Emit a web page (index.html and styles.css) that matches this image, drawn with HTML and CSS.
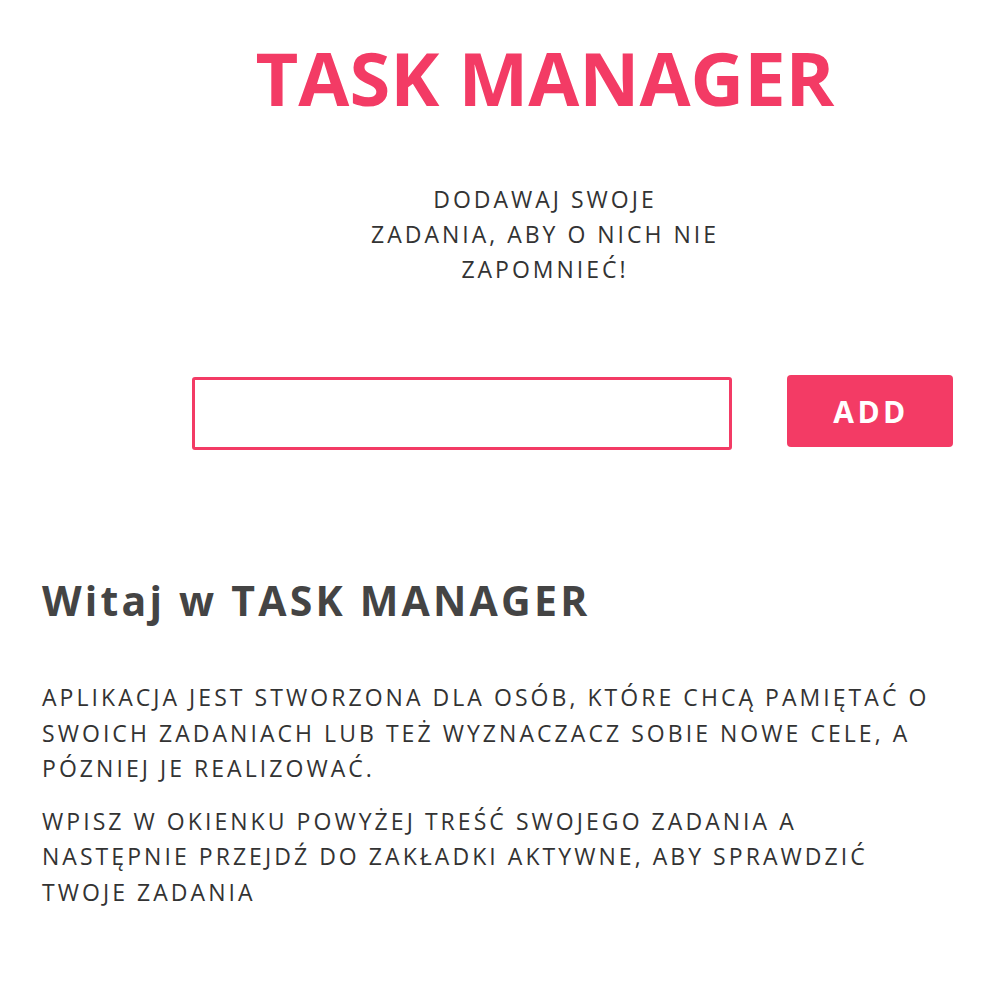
FILE: index.html
```html
<!DOCTYPE html>
<html lang="pl">
<head>
<meta charset="utf-8">
<title>Task Manager</title>
<link rel="stylesheet" href="styles.css">
</head>
<body>
<header class="hero">
  <h1 class="logo">TASK MANAGER</h1>
  <p class="tagline">DODAWAJ SWOJE ZADANIA, ABY O NICH NIE ZAPOMNIEĆ!</p>
  <form class="add-form">
    <input class="task-input" type="text">
    <button class="add-btn" type="button">ADD</button>
  </form>
</header>
<main class="intro">
  <h2 class="intro-title">Witaj w TASK MANAGER</h2>
  <p class="intro-text">APLIKACJA JEST STWORZONA DLA OSÓB, KTÓRE CHCĄ PAMIĘTAĆ O SWOICH ZADANIACH LUB TEŻ WYZNACZACZ SOBIE NOWE CELE, A PÓZNIEJ JE REALIZOWAĆ.</p>
  <p class="intro-text">WPISZ W OKIENKU POWYŻEJ TREŚĆ SWOJEGO ZADANIA A NASTĘPNIE PRZEJDŹ DO ZAKŁADKI AKTYWNE, ABY SPRAWDZIĆ TWOJE ZADANIA</p>
</main>
</body>
</html>
```

FILE: styles.css
```css
* { box-sizing: border-box; }
body {
  margin: 0;
  background: #fff;
  font-family: "Open Sans", "Noto Sans", sans-serif;
  color: #333;
}
.hero {
  margin-left: 90px;
  padding-top: 28px;
  display: flex;
  flex-direction: column;
  align-items: center;
}
.logo {
  margin: 0;
  font-size: 74px;
  font-weight: 700;
  line-height: 100px;
  color: #f33b65;
}
.tagline {
  margin: 54px 0 0;
  max-width: 354px;
  text-align: center;
  font-size: 23px;
  line-height: 35px;
  letter-spacing: 3px;
  color: #333;
}
.add-form {
  margin-top: 88px;
  display: flex;
  align-items: flex-start;
  gap: 55px;
  margin-left: 54px;
}
.task-input {
  width: 540px;
  height: 73px;
  border: 3px solid #f33b65;
  border-radius: 3px;
  margin-top: 2px;
  outline: none;
}
.add-btn {
  width: 166px;
  height: 72px;
  border: none;
  border-radius: 4px;
  background: #f33b65;
  color: #fff;
  font-family: inherit;
  font-weight: 700;
  font-size: 30px;
  letter-spacing: 3.5px;
  padding: 0 0 0 3px;
}
.intro {
  padding: 0 66px 0 42px;
  margin-top: 122px;
}
.intro-title {
  margin: 0 0 52px;
  font-size: 41px;
  font-weight: 700;
  letter-spacing: 3.2px;
  line-height: 56px;
  color: #444;
}
.intro-text {
  margin: 0 0 17px;
  font-size: 23px;
  line-height: 35.5px;
  letter-spacing: 3.05px;
  color: #333;
}
```
